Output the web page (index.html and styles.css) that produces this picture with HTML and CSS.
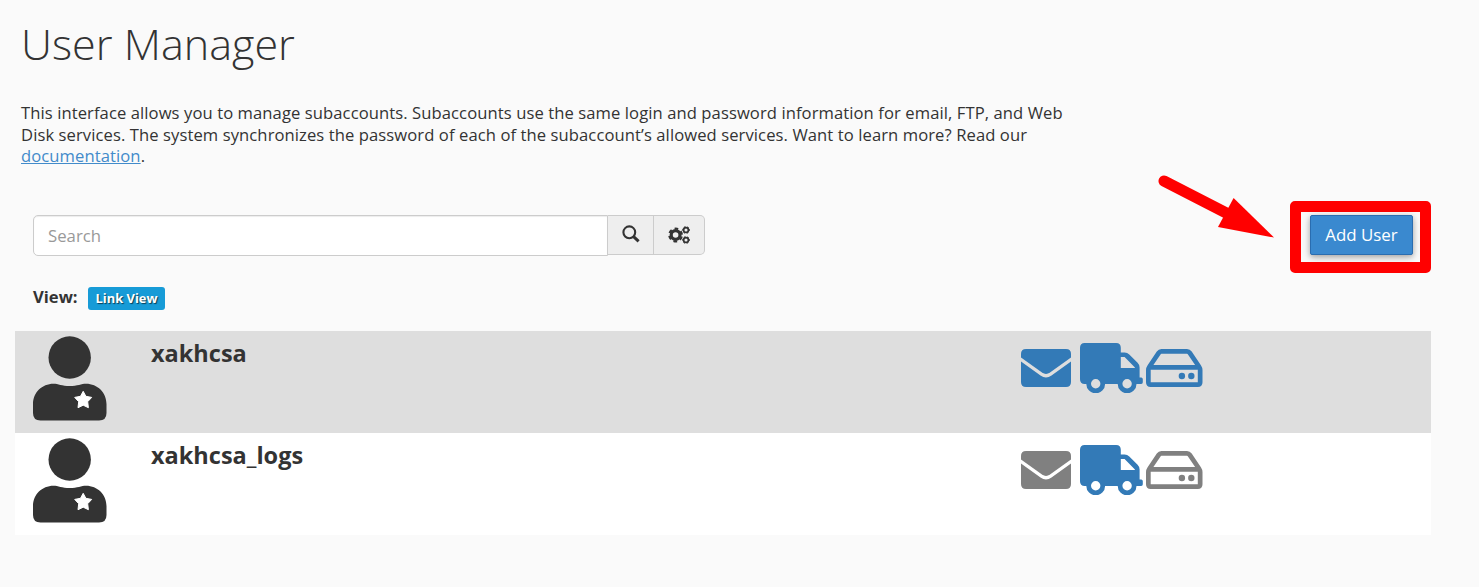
FILE: index.html
```html
<!DOCTYPE html>
<html lang="en">
<head>
<meta charset="utf-8">
<title>User Manager</title>
<link rel="stylesheet" href="styles.css">
</head>
<body>
<svg class="symbols" aria-hidden="true">
  <symbol id="user" viewBox="0 0 74 85">
    <circle cx="36.7" cy="21.5" r="21.2"/>
    <path d="M20.5 47.7C25 47.7 29 50 36.7 50S48.500 47.700 53 47.700C64.500 47.700 73.500 56.500 73.500 68V77Q73.500 84.500 66 84.500H7.500Q0 84.500 0 77V68C0 56.500 9 47.700 20.500 47.700Z"/>
    <path class="star" d="M50.200 55.300L52.900 60.300L58.700 61.400L54.700 65.700L55.400 71.700L50.200 69.200L45 71.700L45.700 65.700L41.700 61.400L47.500 60.300Z"/>
  </symbol>
  <symbol id="mail" viewBox="0 0 50 38">
    <path d="M5 0H45Q50 0 50 5V8.500L29 23.600Q25 26.300 21 23.600L0 8.500V5Q0 0 5 0Z"/>
    <path d="M0 12.500L19.500 26.500Q25 30.400 30.500 26.500L50 12.500V33Q50 38 45 38H5Q0 38 0 33Z"/>
  </symbol>
  <symbol id="truck" viewBox="0 0 63 50">
    <path fill-rule="evenodd" d="M4.700 0H36.200Q40.800 0 40.800 4.700V9.400H44.600Q47.300 9.400 49.300 11.400L57.600 19.700Q59.600 21.700 59.600 24.400V34.600H61.200Q62.800 34.600 62.800 36.200V39.300Q62.800 40.900 61.200 40.900H56.500A9.400 9.400 0 1 1 37.700 40.900H25.100A9.400 9.400 0 1 1 6.300 40.900H4.700Q0 40.900 0 36.200V4.700Q0 0 4.700 0ZM40.800 14.100V25H54.900V24.400L44.600 14.100ZM15.700 36.100A4.700 4.700 0 1 0 15.700 45.500A4.700 4.700 0 1 0 15.700 36.100ZM47.100 36.100A4.700 4.700 0 1 0 47.100 45.500A4.700 4.700 0 1 0 47.100 36.100Z"/>
  </symbol>
  <symbol id="drive" viewBox="0 0 57 38">
    <path fill-rule="evenodd" d="M15.400 0H41Q44 0 45.700 2.500L54.900 16.300Q56.500 18.700 56.500 21V33.300Q56.500 38 51.800 38H4.700Q0 38 0 33.300V21Q0 18.700 1.600 16.300L10.800 2.500Q12.500 0 15.400 0ZM15.400 4.700Q15 4.700 14.700 5.200L7.400 16H49.100L41.800 5.200Q41.500 4.700 41 4.700ZM4.700 20.700V33.300H51.800V20.700Z"/>
    <circle cx="35.900" cy="27" r="3.200"/><circle cx="45.300" cy="27" r="3.200"/>
  </symbol>
</svg>
<main class="page">
  <h1 class="title">User Manager</h1>
  <p class="intro">This interface allows you to manage subaccounts. Subaccounts use the same login and password information for email, FTP, and Web Disk services. The system synchronizes the password of each of the subaccount’s allowed services. Want to learn more? Read our <a class="link" href="#">documentation</a>.</p>

  <div class="toolbar">
    <div class="search">
      <input class="search-input" type="text" placeholder="Search" aria-label="Search">
      <button class="addon addon-search" aria-label="Search">
        <svg width="18" height="18" viewBox="0 0 18 18" fill="none" stroke="#333"><circle cx="7.300" cy="7.300" r="5.900" stroke-width="2.100"/><path d="M11.600 11.600L16.600 16.300" stroke-width="3"/></svg>
      </button>
      <button class="addon addon-settings" aria-label="Settings">
        <svg width="22" height="18" viewBox="0 0 22 18" fill="none" stroke="#333">
          <circle cx="7.600" cy="9" r="4.400" stroke-width="3.200"/>
          <circle cx="7.600" cy="9" r="6.400" stroke-width="2" stroke-dasharray="3.700 3.002" transform="rotate(14 7.600 9)"/>
          <circle cx="18" cy="4" r="2.400" stroke-width="1.700"/>
          <circle cx="18" cy="4" r="3.400" stroke-width=".9" stroke-dasharray="1.800 1.760" transform="rotate(-15 18 4)"/>
          <circle cx="18" cy="14" r="2.400" stroke-width="1.700"/>
          <circle cx="18" cy="14" r="3.400" stroke-width=".9" stroke-dasharray="1.800 1.760" transform="rotate(-15 18 14)"/>
        </svg>
      </button>
    </div>
    <div class="add-wrap">
      <button class="add">Add User</button>
      <svg class="arrow" width="118" height="66" viewBox="0 0 118 66"><path d="M7 8L80 45.500" stroke="#f00" stroke-width="11" stroke-linecap="round"/><path d="M76.600 25L117 64.500L61 54Z" fill="#f00"/></svg>
    </div>
  </div>

  <div class="view"><span class="view-label">View:</span><span class="badge">Link View</span></div>

  <div class="list">
    <div class="row row-shaded">
      <svg class="avatar"><use href="#user"/></svg>
      <div class="name">xakhcsa</div>
      <div class="services">
        <svg class="mail"><use href="#mail"/></svg>
        <svg class="truck"><use href="#truck"/></svg>
        <svg class="drive"><use href="#drive"/></svg>
      </div>
    </div>
    <div class="row">
      <svg class="avatar"><use href="#user"/></svg>
      <div class="name">xakhcsa_logs</div>
      <div class="services">
        <svg class="mail off"><use href="#mail"/></svg>
        <svg class="truck"><use href="#truck"/></svg>
        <svg class="drive off"><use href="#drive"/></svg>
      </div>
    </div>
  </div>
</main>
</body>
</html>
```
FILE: styles.css
```css
* { box-sizing: border-box; }
body {
  margin: 0;
  background: #fafafa;
  color: #333;
  font: 16.25px/21.67px "Open Sans", "Noto Sans", sans-serif;
}
.symbols { display: none; }
.page { padding: 19px 48px 0 15px; }
.title {
  margin: 0 0 34px 6px;
  font-size: 43.1px;
  font-weight: 300;
  line-height: 49px;
}
.intro {
  width: 1060px;
  margin: 0 0 48px 6px;
  font-size: 16.6px;
  letter-spacing: .085px;
}
.link { color: #428bca; }
.toolbar {
  display: flex;
  justify-content: space-between;
  align-items: flex-start;
  height: 41px;
  margin-left: 18px;
}
.search { display: flex; align-items: flex-start; width: 672px; }
.search-input {
  flex: 1;
  min-width: 0;
  height: 41px;
  padding: 0 14px 1px;
  border: 1px solid #ccc;
  border-radius: 5px 0 0 5px;
  background: #fff;
  box-shadow: inset 0 1px 1px rgba(0, 0, 0, .075);
  font: inherit;
  font-size: 16.75px;
}
.search-input::placeholder { color: #999; opacity: 1; }
.addon {
  display: flex;
  align-items: center;
  justify-content: center;
  height: 40px;
  padding: 0;
  border: 1px solid #ccc;
  border-left: 0;
  background: #eee;
}
.addon-search { width: 46px; padding-bottom: 3px; }
.addon-settings { width: 51px; padding-bottom: 1px; border-radius: 0 5px 5px 0; }
.add-wrap {
  position: relative;
  width: 141px;
  height: 72px;
  margin-top: -14px;
  padding: 3px 0 0 9px;
  border: 11px solid #f00;
  border-radius: 5px;
}
.add {
  display: block;
  width: 103px;
  height: 40px;
  padding: 0 0 1px;
  border: 1px solid #2a6db0;
  border-radius: 2px;
  background: #3a89cf;
  box-shadow: 0 2px 10px rgba(0, 0, 0, .2), 0 2px 5px rgba(0, 0, 0, .2);
  color: #fff;
  font: inherit;
  font-size: 16.9px;
}
.arrow { position: absolute; left: -144px; top: -39px; }
.view { display: flex; height: 23px; margin: 31px 0 21px 18px; }
.view-label { width: 55px; margin-top: -1px; font-size: 16.6px; font-weight: 700; }
.badge {
  width: 77px;
  height: 23px;
  border-radius: 3px;
  background: #179bd7;
  color: #fff;
  font-size: 12.9px;
  font-weight: 700;
  line-height: 23px;
  text-align: center;
  text-shadow: 1px 1px 1px rgba(0, 0, 0, .6);
}
.row {
  display: flex;
  align-items: flex-start;
  height: 102px;
  padding: 5px 227.700px 0 18px;
  background: #fff;
}
.row-shaded { background: #dedede; }
.avatar { width: 74px; height: 85px; margin-right: 44px; fill: #333; }
.star { fill: #fff; stroke: #fff; stroke-width: 1; stroke-linejoin: round; }
.name { flex: 1; font-size: 23.5px; font-weight: 700; line-height: 34px; }
.services { display: flex; padding-top: 7px; fill: #337ab7; }
.mail { width: 50px; height: 38px; margin: 6px 9px 0 0; }
.truck { width: 63px; height: 50px; margin-right: 3px; }
.drive { width: 57px; height: 38px; margin-top: 6px; }
.off { fill: #808080; }
```
